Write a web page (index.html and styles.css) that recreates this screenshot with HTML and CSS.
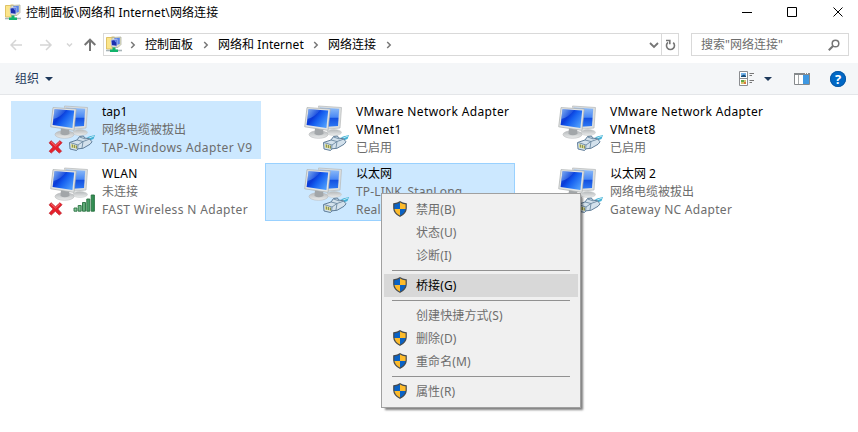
FILE: index.html
```html
<!DOCTYPE html>
<html lang="zh-CN">
<head>
<meta charset="utf-8">
<title>网络连接</title>
<link rel="stylesheet" href="styles.css">
</head>
<body>
<svg width="0" height="0" class="defs" aria-hidden="true">
  <defs>
    <linearGradient id="screen" x1="0" y1="0" x2="1" y2="0.7">
      <stop offset="0" stop-color="#2f6be0"/><stop offset="0.4" stop-color="#0a3ad8"/><stop offset="0.6" stop-color="#1660f0"/><stop offset="1" stop-color="#4b9afc"/>
    </linearGradient>
    <linearGradient id="shine" x1="0" y1="0" x2="1" y2="0.5">
      <stop offset="0" stop-color="#a8cdf8" stop-opacity=".7"/><stop offset="1" stop-color="#5f9bf2" stop-opacity=".15"/>
    </linearGradient>
    <linearGradient id="back" x1="0" y1="0" x2="0" y2="1">
      <stop offset="0" stop-color="#8fbdf8"/><stop offset="0.5" stop-color="#4a88f4"/><stop offset="0.55" stop-color="#1450e0"/><stop offset="1" stop-color="#2f7af4"/>
    </linearGradient>
    <linearGradient id="stand" x1="0" y1="0" x2="0" y2="1">
      <stop offset="0" stop-color="#b4b8ba"/><stop offset="1" stop-color="#eceded"/>
    </linearGradient>
    <linearGradient id="bar" x1="0" y1="0" x2="1" y2="0">
      <stop offset="0" stop-color="#8fcca0"/><stop offset="1" stop-color="#2c8a4e"/>
    </linearGradient>
    <symbol id="pcs" viewBox="0 0 48 48">
      <ellipse cx="31" cy="27.500" rx="7.500" ry="3" fill="url(#stand)" stroke="#c3c6c7" stroke-width=".5"/>
      <path d="M15.500 1L38.500 2.500 37 23 20 24.500z" fill="#dcdfdf" stroke="#b4b8b9" stroke-width=".7"/>
      <path d="M17 2.500L36.200 3.700 35 21 20 22z" fill="url(#back)"/>
      <ellipse cx="15.500" cy="29.500" rx="9.500" ry="3.800" fill="url(#stand)" stroke="#b8bbbc" stroke-width=".6"/>
      <path d="M12 23h8l.5 6q-5 2.500-9 0z" fill="#a2a6a9"/>
      <path d="M4 2.600L27.200 4 25 25.400 1.700 21.800z" fill="#e2e4e4" stroke="#a9adae" stroke-width=".7"/>
      <path d="M5.500 4.200L25.200 5.400 23.400 23 3.600 19.900z" fill="url(#screen)"/>
      <path d="M5.500 4.200L17 4.900Q12 12 4.400 14z" fill="url(#shine)"/>
    </symbol>
    <symbol id="cable" viewBox="0 0 28 18">
      <path d="M17 5l4-2.500L27 1l-1.500 4-4 1.500-2.500 2z" fill="#43b1d6"/>
      <path d="M19 5l7-3" stroke="#b9e8f3" fill="none"/>
      <path d="M1.500 8.500L9 6l2.500-3.500 4-.5 1 2 5 .8 2.500 3-2 2.500-7 4-5 .5-1.500 1.700-6.500-1.500z" fill="#d3e1ec" stroke="#52728e" stroke-width=".9"/>
      <path d="M9 6l6 1.500 7-2.500M15 7.500L14 14M2 8.500l8 2.500 5-3.500M10 11l-.5 5M11.500 3l6 2" fill="none" stroke="#6c89a2" stroke-width=".9"/>
      <path d="M3 10l6 1.800v3L3 13.500z" fill="#d9d887"/>
      <path d="M4.500 10.500v3M6.500 11v3M8.500 11.500v3" stroke="#697448" stroke-width=".7"/>
    </symbol>
    <symbol id="cross" viewBox="0 0 16 16">
      <path d="M3.200 1.200L8 5.500 12.800 1.200 15 3.500 10.500 8 14.500 12.500 12 14.500 7.800 10.500 3.500 14.500 1.200 12.500 5.400 8 1.200 3.600z" fill="#e6202b" stroke="#b81c26" stroke-width=".7"/>
      <path d="M3.200 2.600L8 6.900l4.700-4.300" fill="none" stroke="#f47a7a" stroke-width=".9"/>
    </symbol>
    <symbol id="signal" viewBox="0 0 23 18">
      <g fill="url(#bar)" stroke="#27713f" stroke-width=".9"><path d="M1 14h3v3.200H1zM5.200 11.500h3v5.700h-3zM9.500 8.500h3v8.700h-3zM13.800 5h3v12.200h-3zM18.200 1h3.200v16.200h-3.200z"/></g>
    </symbol>
    <symbol id="shield" viewBox="0 0 14 16">
      <path d="M7 .8C5.200 2.200 3 2.700.8 2.800v4.400C.9 11 3.500 13.500 7 15.300c3.500-1.800 6.100-4.300 6.200-8.100V2.800C11 2.700 8.800 2.200 7 .8z" fill="#fdbb2b"/>
      <path d="M7 .8C5.200 2.200 3 2.700.8 2.800V8H7zM7 8h6.200c-.4 3.300-2.900 5.600-6.200 7.300z" fill="#0a62c4"/>
      <path d="M7 .8C5.200 2.200 3 2.700.8 2.800v4.400C.9 11 3.500 13.500 7 15.300c3.500-1.800 6.100-4.300 6.200-8.100V2.800C11 2.700 8.800 2.200 7 .8z" fill="none" stroke="#454a4f" stroke-width="1.200"/>
    </symbol>
    <symbol id="folder" viewBox="0 0 16 17">
      <path d="M.5 1.500h5V1h3v12h-8z" fill="#fbe58b" stroke="#d8b64e" stroke-width=".8"/>
      <path d="M6 1.500L15 1v7.500L12 11.500H6z" fill="#e4e3c5" stroke="#a8aa9c" stroke-width=".7"/>
      <path d="M8 2.300l5.800-.5v6.200l-3 1z" fill="#5b84e8"/>
      <path d="M5 4.200l6-1V10.200L5.500 9.500z" fill="#1b2fae" stroke="#c7cff2" stroke-width=".8"/>
      <path d="M8 4.300l2.500-.4v3z" fill="#6d95f2"/>
      <path d="M0 14.500h16" stroke="#a8b5b9" stroke-width="1.600"/>
      <path d="M6.500 11.500h3v2H12V16H4v-2.500h2.500z" fill="#12b36b"/>
    </symbol>
    <symbol id="sep" viewBox="0 0 6 8"><path d="M1.200 1l3 3-3 3" fill="none" stroke="#777" stroke-width="1.500"/></symbol>
  </defs>
</svg>
<div class="window">
  <header class="titlebar">
    <svg class="app-icon"><use href="#folder"/></svg>
    <span class="title">控制面板\网络和 Internet\网络连接</span>
    <svg class="caption" viewBox="0 0 102 12"><g fill="none" stroke="#000"><path d="M0 6.500h10M45.500 1.500h9v9h-9zM91.500 1.500l9 9M100.500 1.500l-9 9"/></g></svg>
  </header>
  <div class="address-row">
    <svg class="nav" viewBox="0 0 90 16"><g fill="none" stroke="#d5d5d5" stroke-width="1.500"><path d="M1 8h11M6 3L1 8l5 5M30 8h11M36 3l5 5-5 5"/><path d="M57 6.500l2.500 2.500L62 6.500"/><path stroke="#757575" stroke-width="2" d="M80 14V3M74.700 8L80 2.700 85.300 8"/></g></svg>
    <div class="address">
      <svg class="app-icon"><use href="#folder"/></svg>
      <svg class="sep s1"><use href="#sep"/></svg><span class="crumb c1">控制面板</span>
      <svg class="sep"><use href="#sep"/></svg><span class="crumb c2">网络和 Internet</span>
      <svg class="sep"><use href="#sep"/></svg><span class="crumb c3">网络连接</span>
      <svg class="sep"><use href="#sep"/></svg>
      <svg class="drop" viewBox="0 0 10 8"><path d="M1 2l4 4 4-4" fill="none" stroke="#757575" stroke-width="1.800"/></svg>
      <span class="refresh"><svg viewBox="0 0 11 12"><path d="M8.200 3.600A4 4 0 1 1 3 3.400M1 1.500h3.800v3.800" fill="none" stroke="#757575" stroke-width="1.600"/></svg></span>
    </div>
    <div class="search"><span>搜索"网络连接"</span><svg viewBox="0 0 12 12"><circle cx="7.500" cy="4.500" r="3.300" fill="none" stroke="#757575" stroke-width="1.500"/><path d="M5 7L.8 11.200" stroke="#757575" stroke-width="2"/></svg></div>
  </div>
  <div class="toolbar">
    <span class="organize">组织</span><i class="caret"></i>
    <svg class="view" viewBox="0 0 16 16"><path d="M.5.500h8v14h-8zM.5 7.500h8" fill="#fff" stroke="#8b8d90"/><path d="M2 2h5v4H2z" fill="#75b3ea"/><path d="M2 5l3-1.500L7 5v1H2z" fill="#174d79"/><path d="M2 9h5v4H2z" fill="#d3c46c"/><path d="M2 9h3v2H2z" fill="#64a747"/><path d="M5 11h2v2H5z" fill="#dc7842"/><path d="M10.500 2.500H15M10.500 4.500H13M10.500 9.500H15M10.500 11.500H13" stroke="#777"/></svg>
    <i class="caret second"></i>
    <svg class="pane" viewBox="0 0 16 12"><path d="M.5.500h15v11H.5z" fill="#fff" stroke="#85898c"/><path d="M0 1h16" stroke="#85898c" stroke-width="2"/><path d="M4.500 2v9" stroke="#a5a9ab"/><path d="M9 2h6v9H9z" fill="#3e98e2"/><path d="M11 .5h1M13 .5h1" stroke="#fff"/></svg>
    <span class="help">?</span>
  </div>
  <main class="grid">
    <section class="item selected">
      <div class="icon"><svg class="pcs"><use href="#pcs"/></svg><svg class="cross"><use href="#cross"/></svg><svg class="cable"><use href="#cable"/></svg></div>
      <div class="text"><p class="name">tap1</p><p>网络电缆被拔出</p><p class="latin wide">TAP-Windows Adapter V9</p></div>
    </section>
    <section class="item">
      <div class="icon"><svg class="pcs"><use href="#pcs"/></svg><svg class="cable"><use href="#cable"/></svg></div>
      <div class="text"><p class="name latin">VMware Network Adapter</p><p class="name latin">VMnet1</p><p>已启用</p></div>
    </section>
    <section class="item">
      <div class="icon"><svg class="pcs"><use href="#pcs"/></svg><svg class="cable"><use href="#cable"/></svg></div>
      <div class="text"><p class="name latin">VMware Network Adapter</p><p class="name latin">VMnet8</p><p>已启用</p></div>
    </section>
    <section class="item">
      <div class="icon"><svg class="pcs"><use href="#pcs"/></svg><svg class="cross"><use href="#cross"/></svg><svg class="signal"><use href="#signal"/></svg></div>
      <div class="text"><p class="name latin">WLAN</p><p>未连接</p><p class="latin">FAST Wireless N Adapter</p></div>
    </section>
    <section class="item selected focused">
      <div class="icon"><svg class="pcs"><use href="#pcs"/></svg><svg class="cable"><use href="#cable"/></svg></div>
      <div class="text"><p class="name">以太网</p><p class="snug">TP-LINK_StanLong</p><p class="snug">Real</p></div>
    </section>
    <section class="item">
      <div class="icon"><svg class="pcs"><use href="#pcs"/></svg><svg class="cable"><use href="#cable"/></svg></div>
      <div class="text"><p class="name">以太网 2</p><p>网络电缆被拔出</p><p class="latin loose">Gateway NC Adapter</p></div>
    </section>
  </main>
  <nav class="menu">
    <div class="entry"><svg><use href="#shield"/></svg><span>禁用(B)</span></div>
    <div class="entry"><span>状态(U)</span></div>
    <div class="entry"><span>诊断(I)</span></div>
    <hr>
    <div class="entry active"><svg><use href="#shield"/></svg><span>桥接(G)</span></div>
    <hr>
    <div class="entry"><span>创建快捷方式(S)</span></div>
    <div class="entry"><svg><use href="#shield"/></svg><span>删除(D)</span></div>
    <div class="entry"><svg><use href="#shield"/></svg><span>重命名(M)</span></div>
    <hr>
    <div class="entry"><svg><use href="#shield"/></svg><span>属性(R)</span></div>
  </nav>
</div>
</body>
</html>
```
FILE: styles.css
```css
* { box-sizing: border-box; }
body { margin: 0; background: #fff; color: #000; font: 12px/18px "Noto Sans", "Noto Sans CJK SC", sans-serif; }
p { margin: 0; }
svg { display: block; flex: none; }
.defs { position: absolute; }
.window { position: relative; width: 858px; height: 432px; overflow: hidden; }
.titlebar { height: 33px; padding: 4px 14px 0 5px; display: flex; align-items: flex-start; }
.app-icon { width: 16px; height: 17px; }
.title { margin-left: 5px; white-space: nowrap; letter-spacing: .1px; }
.caption { width: 102px; height: 12px; margin: 2px 0 0 auto; }
.address-row { height: 23px; display: flex; }
.nav { width: 90px; height: 16px; margin: 4px 3px 0 10px; }
.address { width: 576px; border: 1px solid #d9d9d9; display: flex; align-items: center; padding-left: 2px; white-space: nowrap; }
.sep { width: 6px; height: 8px; }
.sep.s1 { margin-left: 8px; }
.crumb { margin-left: 9px; line-height: 20px; }
.c1 { width: 58px; }
.c2 { width: 95px; letter-spacing: .05px; }
.c3 { width: 58px; }
.drop { width: 10px; height: 8px; margin-left: auto; margin-right: 2px; }
.refresh { width: 17px; height: 21px; border-left: 1px solid #d9d9d9; display: flex; justify-content: center; align-items: center; }
.refresh svg { width: 11px; height: 12px; }
.search { width: 158px; margin-left: 12px; border: 1px solid #d9d9d9; display: flex; align-items: center; justify-content: space-between; padding: 0 8px 0 9px; color: #6d6d6d; }
.search svg { width: 12px; height: 12px; }
.toolbar { height: 32px; margin-top: 7px; background: #f4f6f8; border-bottom: 1px solid #e4e6e9; display: flex; align-items: center; padding: 0 12px 0 15px; color: #1e395b; }
.caret { border: 4px solid transparent; border-top: 4px solid #1e395b; border-bottom: 0; margin-left: 6px; }
.view { width: 16px; height: 16px; margin-left: auto; }
.caret.second { margin-left: 9px; }
.pane { width: 16px; height: 12px; margin-left: 22px; }
.help { width: 16px; height: 16px; margin-left: 20px; border-radius: 50%; background: #0068c6; outline: 1px solid #0a58a3; outline-offset: -1px; color: #fff; font: bold 13px/16px "Open Sans", sans-serif; text-align: center; }
.grid { display: grid; grid-template-columns: repeat(3, 250px); grid-auto-rows: 58px; gap: 4px; padding: 6px 0 0 11px; }
.item { display: flex; border: 1px solid transparent; padding: 1px 0 0 36px; }
.selected { background: #cce8ff; border-color: #cce8ff; }
.focused { border-color: #99d1ff; }
.icon { position: relative; width: 48px; height: 54px; }
.pcs { width: 48px; height: 48px; margin: 2px 0 0 1px; }
.cross { position: absolute; left: 0; top: 36px; width: 15px; height: 16px; }
.cable { position: absolute; left: 20px; top: 31px; width: 28px; height: 18px; }
.signal { position: absolute; left: 25px; top: 29px; width: 23px; height: 18px; }
.text { margin-left: 6px; color: #6d6d6d; white-space: nowrap; line-height: 18px; }
.name { color: #000; }
.latin { letter-spacing: .36px; }
.latin.wide { letter-spacing: .41px; }
.latin.loose { letter-spacing: .3px; }
.snug { letter-spacing: .18px; }
.menu { position: absolute; left: 381px; top: 193px; width: 200px; height: 215px; border: 1px solid #a0a0a0; padding: 4px 2px; background: #f0f0f0; box-shadow: 3px 3px 2px -1px rgba(0,0,0,.5); }
.entry { height: 23px; display: flex; align-items: center; position: relative; padding-left: 32px; color: #6d6d6d; }
.entry span { letter-spacing: .1px; }
.entry svg { width: 14px; height: 16px; margin: -1px 9px 0 -23px; }
.entry.active { background: #d8d8d8; color: #000; }
.menu hr { height: 1px; border: 0; margin: 3px 8px; background: #919191; }
```
